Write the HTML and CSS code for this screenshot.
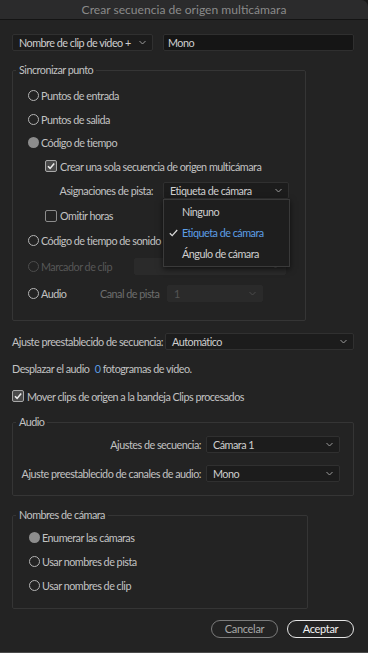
FILE: index.html
```html
<!DOCTYPE html>
<html lang="es">
<head>
<meta charset="utf-8">
<title>Crear secuencia de origen multicámara</title>
<link rel="stylesheet" href="styles.css">
</head>
<body>
<div class="dialog">
  <div class="titlebar">Crear secuencia de origen multicámara</div>
  <div class="content">
    <div class="toprow">
      <div class="select w-clipname"><span>Nombre de clip de vídeo +</span><svg class="chev" width="7" height="5" viewBox="0 0 7 5"><path d="M0.5 1 L3.5 4 L6.5 1"/></svg></div>
      <div class="textinput">Mono</div>
    </div>

    <fieldset class="group sync">
      <legend>Sincronizar punto</legend>
      <div class="sync-grid">
        <div class="opt"><span class="radio"></span><span>Puntos de entrada</span></div>
        <div class="opt"><span class="radio"></span><span>Puntos de salida</span></div>
        <div class="opt"><span class="radio on"></span><span>Código de tiempo</span></div>
        <div class="opt sub"><span class="check"><svg viewBox="0 0 10 10"><path d="M2 5.3 L4.1 7.4 L8.2 2.6"/></svg></span><span>Crear una sola secuencia de origen multicámara</span></div>
        <div class="opt">
          <span class="lbl-assign">Asignaciones de pista:</span>
          <div class="select w-assign"><span>Etiqueta de cámara</span><svg class="chev" width="7" height="5" viewBox="0 0 7 5"><path d="M0.5 1 L3.5 4 L6.5 1"/></svg>
            <div class="menu">
              <div class="menu-item">Ninguno</div>
              <div class="menu-item sel"><svg class="mcheck" width="9" height="8" viewBox="0 0 9 8"><path d="M0.8 4.2 L3.2 6.6 L8.2 1"/></svg>Etiqueta de cámara</div>
              <div class="menu-item">Ángulo de cámara</div>
            </div>
          </div>
        </div>
        <div class="opt sub"><span class="check empty"></span><span>Omitir horas</span></div>
        <div class="opt"><span class="radio"></span><span>Código de tiempo de sonido</span></div>
        <div class="opt disabled">
          <span class="optlbl w-marker-lbl"><span class="radio"></span><span>Marcador de clip</span></span>
          <div class="select dis w-marker"><span></span><svg class="chev" width="7" height="5" viewBox="0 0 7 5"><path d="M0.5 1 L3.5 4 L6.5 1"/></svg></div>
        </div>
        <div class="opt">
          <span class="optlbl w-audio-lbl"><span class="radio"></span><span>Audio</span></span>
          <span class="dimlbl">Canal de pista</span>
          <div class="select dis w-canal"><span>1</span><svg class="chev" width="7" height="5" viewBox="0 0 7 5"><path d="M0.5 1 L3.5 4 L6.5 1"/></svg></div>
        </div>
      </div>
    </fieldset>

    <div class="presetrow">
      <span class="lbl-preset">Ajuste preestablecido de secuencia:</span>
      <div class="select w-preset"><span>Automático</span><svg class="chev" width="7" height="5" viewBox="0 0 7 5"><path d="M0.5 1 L3.5 4 L6.5 1"/></svg></div>
    </div>

    <div class="shiftrow">Desplazar el audio <span class="num">0</span> fotogramas de vídeo.</div>

    <div class="moverow"><span class="check"><svg viewBox="0 0 10 10"><path d="M2 5.3 L4.1 7.4 L8.2 2.6"/></svg></span><span>Mover clips de origen a la bandeja Clips procesados</span></div>

    <fieldset class="group audio">
      <legend>Audio</legend>
      <div class="audio-grid">
        <span class="alabel">Ajustes de secuencia:</span>
        <div class="select"><span>Cámara 1</span><svg class="chev" width="7" height="5" viewBox="0 0 7 5"><path d="M0.5 1 L3.5 4 L6.5 1"/></svg></div>
        <span class="alabel">Ajuste preestablecido de canales de audio:</span>
        <div class="select"><span>Mono</span><svg class="chev" width="7" height="5" viewBox="0 0 7 5"><path d="M0.5 1 L3.5 4 L6.5 1"/></svg></div>
      </div>
    </fieldset>

    <fieldset class="group names">
      <legend>Nombres de cámara</legend>
      <div class="names-list">
        <div class="opt"><span class="radio on"></span><span>Enumerar las cámaras</span></div>
        <div class="opt"><span class="radio"></span><span>Usar nombres de pista</span></div>
        <div class="opt"><span class="radio"></span><span>Usar nombres de clip</span></div>
      </div>
    </fieldset>

    <div class="buttons">
      <button class="btn cancel">Cancelar</button>
      <button class="btn ok">Aceptar</button>
    </div>
  </div>
</div>
</body>
</html>
```

FILE: styles.css
```css
* { box-sizing: border-box; }
html, body { margin: 0; padding: 0; }
body {
  width: 368px;
  height: 653px;
  overflow: hidden;
  background: #1a1a1a;
  font-family: Lato, "Noto Sans", sans-serif;
  font-size: 10.8px;
  letter-spacing: -0.5px;
  color: #c2c2c2;
}
.dialog {
  height: 653px;
  background: #232323;
  border-bottom: 1px solid #4a4a4a;
  border-top-right-radius: 7px;
  overflow: hidden;
  display: flex;
  flex-direction: column;
}
.titlebar {
  height: 20px;
  flex: none;
  background: #2b2b2c;
  border-bottom: 1px solid #141414;
  text-align: center;
  line-height: 19px;
  font-size: 12.1px;
  letter-spacing: 0;
  color: #8a8a8a;
}
.content {
  padding: 14px 14px 0 12px;
  display: flex;
  flex-direction: column;
}

/* selects & inputs */
.select {
  position: relative;
  height: 17px;
  background: #1c1c1c;
  border: 1px solid #303030;
  border-radius: 2px;
  padding: 0 6px 0 6px;
  display: flex;
  align-items: center;
  justify-content: space-between;
  color: #cfcfcf;
  white-space: nowrap;
}
.chev { flex: none; }
.chev path { fill: none; stroke: #9a9a9a; stroke-width: 1; }
.select.dis { background: #2a2a2a; border-color: #2a2a2a; color: #555; }
.select.dis .chev path { stroke: #4a4a4a; }

.toprow { display: flex; gap: 10px; height: 17px; }
.w-clipname { width: 141px; }
.textinput {
  flex: 1;
  height: 17px;
  background: #151515;
  border: 1px solid #2f2f2f;
  border-radius: 2px;
  padding-left: 4px;
  line-height: 15px;
  color: #d0d0d0;
}

/* groups */
fieldset.group {
  margin: 0;
  border: 1px solid #353535;
  border-radius: 2px;
  min-width: 0;
}
fieldset.group legend {
  padding: 0 3px;
  line-height: 14px;
  color: #c2c2c2;
}
fieldset.sync { margin-top: 12px; width: 294px; padding: 7px 0 13px 15px; }
fieldset.sync legend { margin-left: -12px; }
.sync-grid {
  display: grid;
  grid-template-rows: 23px 24px 23px 24px 25px 25px 25px 27px 27px;
}
.opt { display: flex; align-items: center; white-space: nowrap; }
.opt.sub { padding-left: 17px; }

.radio {
  flex: none;
  width: 11px;
  height: 11px;
  border-radius: 50%;
  border: 1.5px solid #b4b4b4;
  margin-right: 2px;
}
.radio.on { border: none; background: #8d8d8d; }
.check {
  flex: none;
  width: 12px;
  height: 12px;
  border: 1.5px solid #a8a8a8;
  border-radius: 2px;
  background: #4a4a4a;
  margin-right: 3px;
  display: flex;
  align-items: center;
  justify-content: center;
}
.check svg { width: 10px; height: 10px; }
.check svg path { fill: none; stroke: #ececec; stroke-width: 1.6; }
.check.empty { background: transparent; border-color: #8c8c8c; }

.lbl-assign { width: 125px; text-align: right; margin-right: 10px; }
.w-assign { width: 126px; }
.optlbl { display: flex; align-items: center; }
.w-marker-lbl { width: 106px; }
.w-marker { width: 152px; }
.w-audio-lbl { width: 72px; }
.dimlbl { width: 67px; color: #6e6e6e; }
.w-canal { width: 96px; }
.disabled { color: #575757; }
.disabled .radio { border-color: #4d4d4d; }

/* popup menu */
.menu {
  position: absolute;
  left: -1px;
  top: 16px;
  width: 127px;
  padding: 1px 0 2px;
  background: #1e1e1e;
  border: 1px solid #3a3a3a;
  box-shadow: 0 2px 6px rgba(0,0,0,0.6);
  z-index: 5;
}
.menu-item {
  position: relative;
  height: 21px;
  line-height: 21px;
  padding-left: 18px;
  color: #d0d0d0;
}
.menu-item.sel { color: #5d9fe6; }
.mcheck { position: absolute; left: 5px; top: 7px; }
.mcheck path { fill: none; stroke: #d8d8d8; stroke-width: 1.3; }

/* preset row */
.presetrow { margin-top: 12px; display: flex; align-items: center; height: 17px; white-space: nowrap; }
.lbl-preset { width: 153px; }
.w-preset { flex: 1; }

.shiftrow { margin-top: 11px; height: 16px; line-height: 16px; }
.num { color: #5c9de4; margin-left: 3px; }

.moverow { margin-top: 11px; height: 16px; display: flex; align-items: center; white-space: nowrap; }

/* audio group */
fieldset.audio { margin-top: 11px; width: 342px; padding: 7px 13px 13px 0; }
fieldset.audio legend { margin-left: 3px; }
.audio-grid {
  display: grid;
  grid-template-columns: 188px 134px;
  column-gap: 5px;
  row-gap: 12px;
  align-items: center;
}
.alabel { text-align: right; white-space: nowrap; }

/* names group */
fieldset.names { margin-top: 12px; width: 296px; padding: 3px 0 11px 16px; }
fieldset.names legend { margin-left: -13px; }
.names-list { display: grid; grid-template-rows: 24px 24px 24px; }

/* buttons */
.buttons { margin-top: 11px; display: flex; justify-content: flex-end; gap: 9px; }
.btn {
  width: 67px;
  height: 18px;
  border-radius: 9px;
  background: transparent;
  font-family: inherit;
  font-size: 11px;
  letter-spacing: -0.3px;
  padding: 0;
  line-height: 14px;
}
.btn.cancel { border: 1px solid #7a7a7a; color: #a8a8a8; }
.btn.ok { border: 1.5px solid #e6e6e6; color: #f2f2f2; }
```
